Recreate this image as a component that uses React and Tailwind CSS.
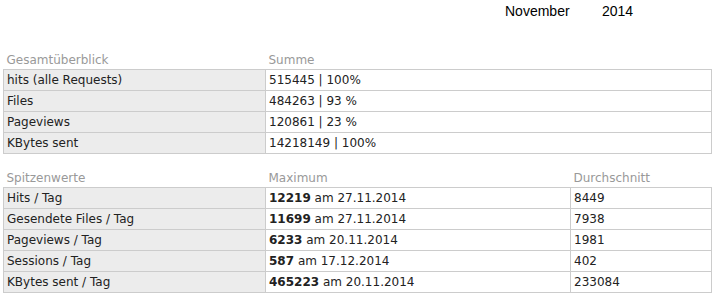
import React from 'react';

const overview = [
  ['hits (alle Requests)', '515445 | 100%'],
  ['Files', '484263 | 93 %'],
  ['Pageviews', '120861 | 23 %'],
  ['KBytes sent', '14218149 | 100%'],
];

const peaks = [
  ['Hits / Tag', '12219', '27.11.2014', '8449'],
  ['Gesendete Files / Tag', '11699', '27.11.2014', '7938'],
  ['Pageviews / Tag', '6233', '20.11.2014', '1981'],
  ['Sessions / Tag', '587', '17.12.2014', '402'],
  ['KBytes sent / Tag', '465223', '20.11.2014', '233084'],
];

const font = { fontFamily: '"DejaVu Sans", Verdana, sans-serif' };

const App = () => {
  return (
    <div className="w-[715px] h-[294px] bg-white text-[#222] overflow-hidden" style={font}>
      <div className="flex pt-[3px] pl-[505px] text-[14px] text-black font-['Liberation_Sans',Arial,sans-serif] leading-[16px]">
        <span className="w-[97px]">November</span>
        <span>2014</span>
      </div>

      <table className="ml-[3px] mt-[29px] w-[709px] border-collapse text-[12px] leading-[14px] table-fixed">
        <colgroup>
          <col className="w-[262px]" />
          <col />
        </colgroup>
        <thead>
          <tr className="h-[21px]">
            <th className="text-left font-normal text-[#999] px-[3px] pt-[3px]">Gesamtüberblick</th>
            <th className="text-left font-normal text-[#999] px-[3px] pt-[3px]">Summe</th>
          </tr>
        </thead>
        <tbody>
          {overview.map(([label, value]) => (
            <tr key={label} className="h-[21px]">
              <td className="border border-[#ccc] bg-[#ececec] px-[3px]">{label}</td>
              <td className="border border-[#ccc] px-[3px]">{value}</td>
            </tr>
          ))}
        </tbody>
      </table>

      <table className="ml-[3px] mt-[13px] w-[709px] border-collapse text-[12px] leading-[14px] table-fixed">
        <colgroup>
          <col className="w-[262px]" />
          <col className="w-[305px]" />
          <col />
        </colgroup>
        <thead>
          <tr className="h-[21px]">
            <th className="text-left font-normal text-[#999] px-[3px] pt-[3px]">Spitzenwerte</th>
            <th className="text-left font-normal text-[#999] px-[3px] pt-[3px]">Maximum</th>
            <th className="text-left font-normal text-[#999] px-[3px] pt-[3px]">Durchschnitt</th>
          </tr>
        </thead>
        <tbody>
          {peaks.map(([label, max, date, avg]) => (
            <tr key={label} className="h-[21px]">
              <td className="border border-[#ccc] bg-[#ececec] px-[3px]">{label}</td>
              <td className="border border-[#ccc] px-[3px]">
                <b className="font-bold">{max}</b> am {date}
              </td>
              <td className="border border-[#ccc] px-[3px]">{avg}</td>
            </tr>
          ))}
        </tbody>
      </table>
    </div>
  );
};

export default App;
